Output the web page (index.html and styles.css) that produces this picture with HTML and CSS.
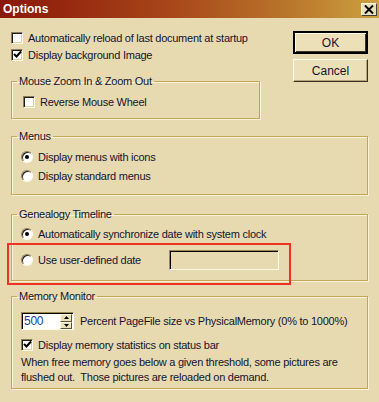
FILE: index.html
```html
<!DOCTYPE html>
<html lang="en">
<head>
    <meta charset="UTF-8">
    <title>Options</title>
    <link rel="stylesheet" href="styles.css">
</head>
<body>
    <div class="titlebar">
        <span class="title">Options</span>
        <span class="close">
            <svg width="10" height="9" viewBox="0 0 10 9"><path d="M1 0.5 L9 8.5 M9 0.5 L1 8.5" stroke="#000" stroke-width="2"/></svg>
        </span>
    </div>

    <div class="dialog">
        <div class="top">
            <div class="top-left">
                <div class="row">
                    <span class="check"></span>
                    <span>Automatically reload of last document at startup</span>
                </div>
                <div class="row">
                    <span class="check"><svg width="9" height="9" viewBox="0 0 9 9"><path d="M1 4 L3.5 6.5 L8 1.5" stroke="#000" stroke-width="2" fill="none"/></svg></span>
                    <span>Display background Image</span>
                </div>
                <fieldset class="group mouse-group">
                    <legend>Mouse Zoom In &amp; Zoom Out</legend>
                    <div class="group-body">
                        <div class="row">
                            <span class="check"></span>
                            <span>Reverse Mouse Wheel</span>
                        </div>
                    </div>
                </fieldset>
            </div>
            <div class="buttons">
                <button class="btn btn-default">OK</button>
                <button class="btn">Cancel</button>
            </div>
        </div>

        <fieldset class="group menus-group">
            <legend>Menus</legend>
            <div class="group-body">
                <div class="row tall">
                    <span class="radio on"></span>
                    <span>Display menus with icons</span>
                </div>
                <div class="row tall">
                    <span class="radio"></span>
                    <span>Display standard menus</span>
                </div>
            </div>
        </fieldset>

        <fieldset class="group timeline-group">
            <legend>Genealogy Timeline</legend>
            <div class="group-body">
                <div class="row tall">
                    <span class="radio on"></span>
                    <span>Automatically synchronize date with system clock</span>
                </div>
                <div class="row date-row">
                    <span class="radio"></span>
                    <span class="date-label">Use user-defined date</span>
                    <span class="date-field"></span>
                    <span class="highlight"></span>
                </div>
            </div>
        </fieldset>

        <fieldset class="group memory-group">
            <legend>Memory Monitor</legend>
            <div class="group-body">
                <div class="spin-row">
                    <span class="spin">
                        <span class="spin-value">500</span>
                        <span class="spin-arrows">
                            <span class="arrow"><svg width="5" height="3" viewBox="0 0 5 3"><path d="M2.5 0 L5 3 L0 3 Z" fill="#000"/></svg></span>
                            <span class="arrow"><svg width="5" height="3" viewBox="0 0 5 3"><path d="M0 0 L5 0 L2.5 3 Z" fill="#000"/></svg></span>
                        </span>
                    </span>
                    <span>Percent PageFile size vs PhysicalMemory (0% to 1000%)</span>
                </div>
                <div class="row">
                    <span class="check"><svg width="9" height="9" viewBox="0 0 9 9"><path d="M1 4 L3.5 6.5 L8 1.5" stroke="#000" stroke-width="2" fill="none"/></svg></span>
                    <span>Display memory statistics on status bar</span>
                </div>
                <p class="note">When free memory goes below a given threshold, some pictures are<br>flushed out.&nbsp; Those pictures are reloaded on demand.</p>
            </div>
        </fieldset>
    </div>
</body>
</html>
```

FILE: styles.css
```css
body {
    margin: 0;
    width: 379px;
    height: 402px;
    background-color: #e8dab0;
    font-family: "Liberation Sans", Arial, sans-serif;
    font-size: 11px;
    letter-spacing: -0.25px;
    color: #14142e;
    overflow: hidden;
}
.titlebar {
    height: 18px;
    display: flex;
    align-items: center;
    justify-content: space-between;
    padding: 0 2px 0 3px;
    background: linear-gradient(to right, #8a1608 0%, #a8461a 45%, #b8742a 75%, #cca040 100%);
}
.title {
    color: white;
    font-weight: bold;
    font-size: 12px;
    letter-spacing: 0;
}
.close {
    width: 16px;
    height: 13px;
    box-sizing: border-box;
    display: flex;
    align-items: center;
    justify-content: center;
    background-color: #ece0b8;
    border: 1px solid;
    border-color: #fffbe6 #404040 #404040 #fffbe6;
    margin-top: 1px;
}
.dialog {
    padding: 11px 11px 0 11px;
}
.top {
    display: flex;
}
.top-left {
    width: 249px;
}
.buttons {
    margin-left: auto;
    margin-top: 2px;
    display: flex;
    flex-direction: column;
    gap: 5px;
}
.btn {
    width: 75px;
    height: 23px;
    font-family: inherit;
    font-size: 12px;
    color: #14142e;
    background-color: #ece0b9;
    border: 1px solid;
    border-color: #fffbe6 #3a3428 #3a3428 #fffbe6;
    box-shadow: inset -1px -1px 0 #b6a478;
    padding: 0;
}
.btn-default {
    border-width: 2px;
    border-color: #000;
    box-shadow: inset 1px 1px 0 #fffbe6, inset -1px -1px 0 #3a3428;
}
.row {
    display: flex;
    align-items: center;
    gap: 5px;
    height: 17px;
}
.row.tall {
    height: 19px;
}
.check {
    width: 12px;
    height: 12px;
    box-sizing: border-box;
    display: flex;
    align-items: center;
    justify-content: center;
    background-color: white;
    border: 1px solid;
    border-color: #8c7c54 #fffbe6 #fffbe6 #8c7c54;
    box-shadow: inset 1px 1px 0 #202020, inset -1px -1px 0 #e0d2a4;
}
.radio {
    width: 12px;
    height: 12px;
    box-sizing: border-box;
    border-radius: 50%;
    background-color: white;
    border: 1px solid;
    border-color: #8c7c54 #fffbe6 #fffbe6 #8c7c54;
    box-shadow: inset 1px 1px 0 #202020;
    display: flex;
    align-items: center;
    justify-content: center;
}
.radio.on::after {
    content: "";
    width: 4px;
    height: 4px;
    border-radius: 50%;
    background-color: #000;
}
.group {
    margin: 0;
    padding: 0;
    border: 1px solid #c4a658;
    box-shadow: 1px 1px 0 #fbf3d6, inset 1px 1px 0 #fbf3d6;
    min-width: 0;
    box-sizing: border-box;
    width: 357px;
}
.group legend {
    margin-left: 5px;
    padding: 0 2px;
    line-height: 13px;
}
.mouse-group {
    margin-top: 12px;
    width: 249px;
}
.mouse-group .group-body {
    padding: 5px 0 8px 11px;
}
.menus-group {
    margin-top: 11px;
}
.menus-group .group-body {
    padding: 4px 0 9px 9px;
}
.timeline-group {
    margin-top: 13px;
}
.timeline-group .group-body {
    padding: 3px 0 10px 9px;
}
.date-row {
    position: relative;
    height: 20px;
    margin-top: 7px;
}
.date-label {
    width: 126px;
}
.date-field {
    width: 110px;
    height: 20px;
    box-sizing: border-box;
    border: 1px solid;
    border-color: #9c8656 #fffbe6 #fffbe6 #9c8656;
    box-shadow: inset 1px 1px 0 #000;
}
.highlight {
    position: absolute;
    left: -14px;
    top: -7px;
    width: 284px;
    height: 42px;
    box-sizing: border-box;
    border: 2px solid #ee3322;
}
.memory-group {
    margin-top: 9px;
}
.memory-group .group-body {
    padding: 9px 0 3px 9px;
}
.spin-row {
    display: flex;
    align-items: center;
    gap: 6px;
    height: 18px;
}
.spin {
    width: 53px;
    height: 18px;
    box-sizing: border-box;
    display: flex;
    align-items: stretch;
    background-color: white;
    border: 1px solid;
    border-color: #9c8656 #fffbe6 #fffbe6 #9c8656;
    box-shadow: inset 1px 1px 0 #000;
}
.spin-value {
    flex: 1;
    color: #1c3ca0;
    padding: 1px 0 0 2px;
    font-size: 12px;
    line-height: 15px;
}
.spin-arrows {
    width: 12px;
    display: flex;
    flex-direction: column;
    margin: 1px 1px 0 0;
}
.arrow {
    flex: 1;
    display: flex;
    align-items: center;
    justify-content: center;
    background-color: #ece0b9;
    border: 1px solid;
    border-color: #fffbe6 #5a5038 #5a5038 #fffbe6;
}
.memory-group .row {
    margin-top: 6px;
}
.note {
    margin: 2px 0 0 0;
    line-height: 15px;
}
```
